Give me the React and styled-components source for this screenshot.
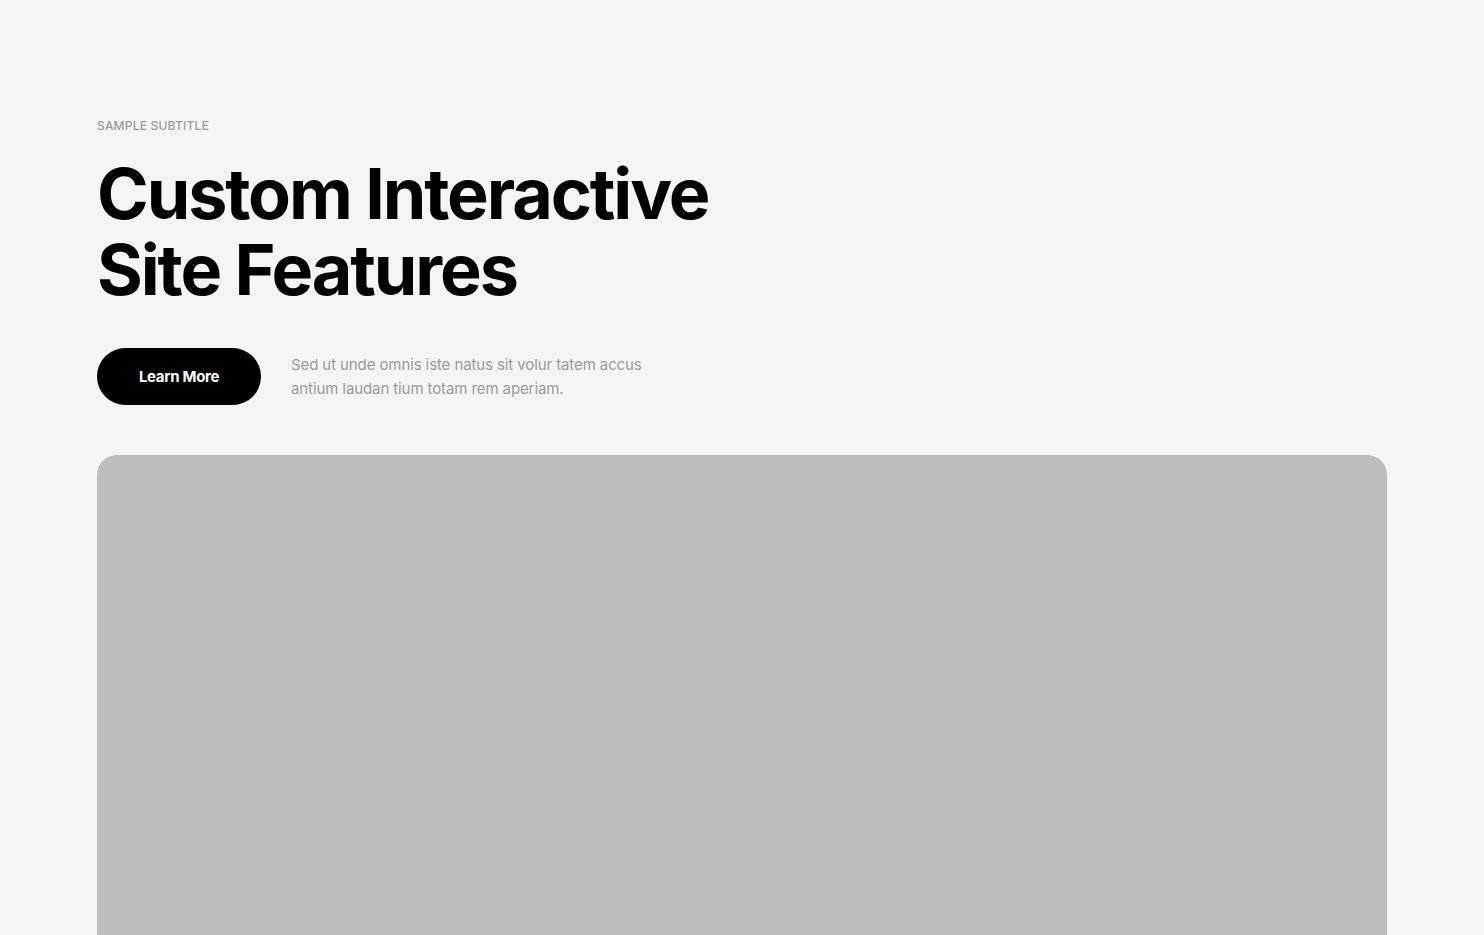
import React from 'react';
import styled, { createGlobalStyle } from 'styled-components';

const GlobalStyle = createGlobalStyle`
  html, body {
    margin: 0;
    padding: 0;
    background-color: #f5f5f5;
    font-family: Inter, "Noto Sans", sans-serif;
  }
`;

const Wrapper = styled.section`
  max-width: 1290px;
  margin: 0 auto;
  padding: 118px 0 0 0;
`;

const Subtitle = styled.div`
  font-size: 12px;
  font-weight: 500;
  color: #9a9a9a;
  text-transform: uppercase;
  letter-spacing: 0.2px;
  line-height: 16px;
  margin-bottom: 22px;
`;

const Title = styled.h1`
  margin: 0;
  font-size: 70px;
  font-weight: 700;
  line-height: 76px;
  letter-spacing: -2.1px;
  color: #000;
`;

const Actions = styled.div`
  display: flex;
  align-items: center;
  gap: 30px;
  margin-top: 40px;
`;

const Button = styled.button`
  width: 164px;
  height: 57px;
  border: none;
  border-radius: 30px;
  background-color: #000;
  color: #fff;
  font-family: inherit;
  font-size: 15px;
  font-weight: 700;
  letter-spacing: -0.3px;
  cursor: pointer;
`;

const Text = styled.p`
  margin: 0;
  width: 380px;
  font-size: 15px;
  line-height: 24px;
  color: #9a9a9a;
  letter-spacing: -0.1px;
`;

const Media = styled.div`
  margin-top: 50px;
  height: 520px;
  border-radius: 20px;
  background-color: #bcbdbf;
`;

const App = () => (
  <>
    <GlobalStyle />
    <Wrapper>
      <Subtitle>Sample Subtitle</Subtitle>
      <Title>
        Custom Interactive
        <br />
        Site Features
      </Title>
      <Actions>
        <Button>Learn More</Button>
        <Text>
          Sed ut unde omnis iste natus sit volur tatem accus
          <br />
          antium laudan tium totam rem aperiam.
        </Text>
      </Actions>
      <Media />
    </Wrapper>
  </>
);

export default App;
